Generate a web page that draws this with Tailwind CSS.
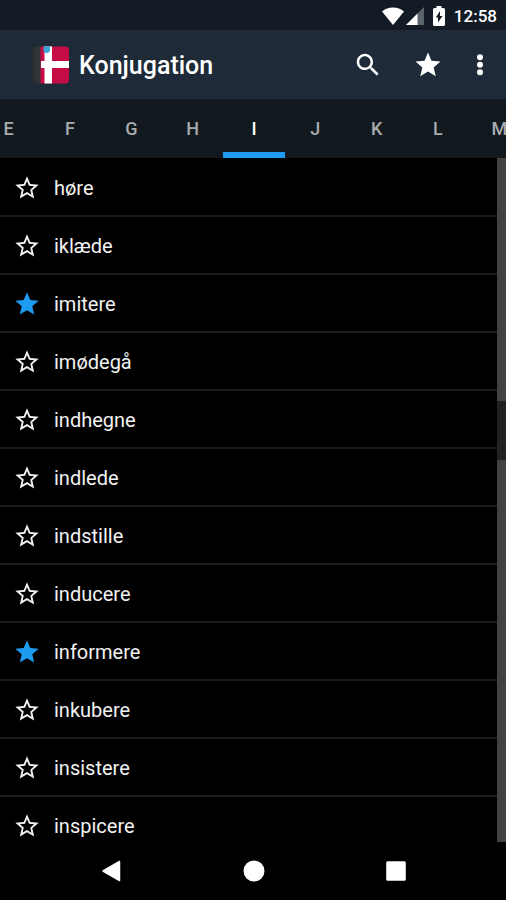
<!DOCTYPE html>
<html lang="da">
<head>
<meta charset="utf-8">
<meta name="viewport" content="width=device-width, initial-scale=1">
<title>Konjugation</title>
<script src="https://cdn.jsdelivr.net/npm/@tailwindcss/browser@4"></script>
</head>
<body class="flex h-screen flex-col overflow-hidden bg-black font-[Roboto,sans-serif] text-white">

<svg class="hidden" aria-hidden="true">
  <symbol id="star" viewBox="0 0 24 24"><path d="M12 17.27L18.18 21l-1.64-7.03L22 9.24l-7.19-.61L12 2 9.19 8.63 2 9.24l5.46 4.73L5.82 21z"/></symbol>
  <symbol id="star-outline" viewBox="0 0 24 24"><path d="M22 9.24l-7.19-.62L12 2 9.19 8.63 2 9.24l5.46 4.73L5.82 21 12 17.27 18.18 21l-1.63-7.03L22 9.24zM12 15.4l-3.76 2.27 1-4.28-3.32-2.88 4.38-.38L12 6.1l1.71 4.04 4.38.38-3.32 2.88 1 4.28L12 15.4z"/></symbol>
</svg>

<div class="flex h-[30px] shrink-0 items-center justify-end bg-[#131c25] pt-px pr-[9px]">
  <svg class="h-[18px] w-[22px]" viewBox="0 0 22 18" fill="#fff"><path d="M0 4.400Q4.600 .6 11 .6T22 4.400L11 18z"/></svg>
  <svg class="ml-[2px] h-[18px] w-[18px]" viewBox="0 0 18 18"><path d="M0 18L18 0v18z" fill="#5b636b"/><path d="M0 18L11.500 6.500V18z" fill="#fff"/></svg>
  <svg class="ml-[9px] h-[20px] w-[12px]" viewBox="0 0 12 20"><path d="M3.500 0h5v2h2q1.500 0 1.500 1.500v15q0 1.500-1.500 1.500h-9Q0 20 0 18.500v-15Q0 2 1.500 2h2z" fill="#fff"/><path d="M7 5v5h2.500L5 16.500v-5H2.800z" fill="#131c25"/></svg>
  <span class="ml-[9px] text-[17px] leading-5 font-medium">12:58</span>
</div>

<header class="flex h-[69px] shrink-0 items-center bg-[#1e2a38] pr-[6px] pl-8">
  <svg class="h-[38px] w-[38px]" viewBox="0 0 38 38" role="img" aria-label="Dansk">
    <defs>
      <linearGradient id="edge"><stop offset="0" stop-color="#252b30"/><stop offset=".4" stop-color="#303233"/><stop offset="1" stop-color="#353535"/></linearGradient>
      <clipPath id="tile"><rect width="37" height="37" y=".5" rx="4"/></clipPath>
    </defs>
    <g clip-path="url(#tile)">
      <path d="M0 0h9v38H0z" fill="url(#edge)"/>
      <path d="M8.500 0h29v38h-29z" fill="#c60c45"/>
      <path d="M12.500 0h7.500v38h-7.500zM9 15h28v7H9z" fill="#fff"/>
      <path d="M11.500 0H18v5l-2 2h-2.500l-2-2z" fill="#35a8d8"/>
    </g>
  </svg>
  <h1 class="ml-[9px] flex-1 pt-[2px] text-[25px] leading-8 font-medium">Konjugation</h1>
  <button type="button" aria-label="Søg" class="flex size-10 items-center justify-center"><svg class="size-[30px]" viewBox="0 0 24 24" fill="#fff"><path d="M15.500 14h-.79l-.28-.27C15.410 12.590 16 11.110 16 9.500 16 5.910 13.090 3 9.500 3S3 5.910 3 9.500 5.910 16 9.500 16c1.610 0 3.090-.59 4.230-1.570l.27.28v.79l5 4.990L20.490 19l-4.990-5zm-6 0C7.010 14 5 11.990 5 9.500S7.010 5 9.500 5 14 7.010 14 9.500 11.990 14 9.500 14z"/></svg></button>
  <button type="button" aria-label="Favoritter" class="ml-5 flex size-10 items-center justify-center"><svg class="size-[30px] fill-white"><use href="#star"/></svg></button>
  <button type="button" aria-label="Mere" class="ml-3 flex size-10 items-center justify-center"><svg class="size-[30px]" viewBox="0 0 24 24" fill="#fff"><circle cx="12" cy="5.700" r="2.400"/><circle cx="12" cy="11.700" r="2.400"/><circle cx="12" cy="17.700" r="2.400"/></svg></button>
</header>

<nav class="h-[59px] shrink-0 overflow-hidden bg-[#11191f]" aria-label="Bogstaver">
  <div class="-mr-6 -ml-[22px] flex h-full text-lg leading-6 font-medium text-[#a8abad]">
    <a href="#e" class="flex flex-1 items-center justify-center pt-[6px] border-b-[6px] border-transparent">E</a>
    <a href="#f" class="flex flex-1 items-center justify-center pt-[6px] border-b-[6px] border-transparent">F</a>
    <a href="#g" class="flex flex-1 items-center justify-center pt-[6px] border-b-[6px] border-transparent">G</a>
    <a href="#h" class="flex flex-1 items-center justify-center pt-[6px] border-b-[6px] border-transparent">H</a>
    <a href="#i" aria-current="true" class="flex flex-1 items-center justify-center pt-[6px] border-b-[6px] border-[#1d9bf0] text-white">I</a>
    <a href="#j" class="flex flex-1 items-center justify-center pt-[6px] border-b-[6px] border-transparent">J</a>
    <a href="#k" class="flex flex-1 items-center justify-center pt-[6px] border-b-[6px] border-transparent">K</a>
    <a href="#l" class="flex flex-1 items-center justify-center pt-[6px] border-b-[6px] border-transparent">L</a>
    <a href="#m" class="flex flex-1 items-center justify-center pt-[6px] border-b-[6px] border-transparent">M</a>
  </div>
</nav>

<main class="relative min-h-0 flex-1 overflow-hidden">
  <ul class="pt-px text-xl leading-7 text-[#f2f2f2]">
    <li class="flex h-[58px] items-center border-b-2 border-[#1b1b1b] pt-[2px] pl-[13px]"><button type="button" aria-label="Favorit"><svg class="size-7 fill-[#f2f2f2]"><use href="#star-outline"/></svg></button><span class="ml-[13px]">høre</span></li>
    <li class="flex h-[58px] items-center border-b-2 border-[#1b1b1b] pt-[2px] pl-[13px]"><button type="button" aria-label="Favorit"><svg class="size-7 fill-[#f2f2f2]"><use href="#star-outline"/></svg></button><span class="ml-[13px]">iklæde</span></li>
    <li class="flex h-[58px] items-center border-b-2 border-[#1b1b1b] pt-[2px] pl-[13px]"><button type="button" aria-label="Favorit" aria-pressed="true"><svg class="size-7 fill-[#1d9bf0]"><use href="#star"/></svg></button><span class="ml-[13px]">imitere</span></li>
    <li class="flex h-[58px] items-center border-b-2 border-[#1b1b1b] pt-[2px] pl-[13px]"><button type="button" aria-label="Favorit"><svg class="size-7 fill-[#f2f2f2]"><use href="#star-outline"/></svg></button><span class="ml-[13px]">imødegå</span></li>
    <li class="flex h-[58px] items-center border-b-2 border-[#1b1b1b] pt-[2px] pl-[13px]"><button type="button" aria-label="Favorit"><svg class="size-7 fill-[#f2f2f2]"><use href="#star-outline"/></svg></button><span class="ml-[13px]">indhegne</span></li>
    <li class="flex h-[58px] items-center border-b-2 border-[#1b1b1b] pt-[2px] pl-[13px]"><button type="button" aria-label="Favorit"><svg class="size-7 fill-[#f2f2f2]"><use href="#star-outline"/></svg></button><span class="ml-[13px]">indlede</span></li>
    <li class="flex h-[58px] items-center border-b-2 border-[#1b1b1b] pt-[2px] pl-[13px]"><button type="button" aria-label="Favorit"><svg class="size-7 fill-[#f2f2f2]"><use href="#star-outline"/></svg></button><span class="ml-[13px]">indstille</span></li>
    <li class="flex h-[58px] items-center border-b-2 border-[#1b1b1b] pt-[2px] pl-[13px]"><button type="button" aria-label="Favorit"><svg class="size-7 fill-[#f2f2f2]"><use href="#star-outline"/></svg></button><span class="ml-[13px]">inducere</span></li>
    <li class="flex h-[58px] items-center border-b-2 border-[#1b1b1b] pt-[2px] pl-[13px]"><button type="button" aria-label="Favorit" aria-pressed="true"><svg class="size-7 fill-[#1d9bf0]"><use href="#star"/></svg></button><span class="ml-[13px]">informere</span></li>
    <li class="flex h-[58px] items-center border-b-2 border-[#1b1b1b] pt-[2px] pl-[13px]"><button type="button" aria-label="Favorit"><svg class="size-7 fill-[#f2f2f2]"><use href="#star-outline"/></svg></button><span class="ml-[13px]">inkubere</span></li>
    <li class="flex h-[58px] items-center border-b-2 border-[#1b1b1b] pt-[2px] pl-[13px]"><button type="button" aria-label="Favorit"><svg class="size-7 fill-[#f2f2f2]"><use href="#star-outline"/></svg></button><span class="ml-[13px]">insistere</span></li>
    <li class="flex h-[58px] items-center border-b-2 border-[#1b1b1b] pt-[2px] pl-[13px]"><button type="button" aria-label="Favorit"><svg class="size-7 fill-[#f2f2f2]"><use href="#star-outline"/></svg></button><span class="ml-[13px]">inspicere</span></li>
  </ul>
  <div class="absolute inset-y-0 right-0 flex w-[9px] flex-col bg-[#424242]">
    <div class="h-[243px]"></div>
    <div class="h-[59px] bg-[#212121]"></div>
  </div>
</main>

<footer class="flex h-[58px] shrink-0 items-center justify-around bg-black pr-[39px] pl-[41px]">
  <button type="button" aria-label="Tilbage"><svg class="size-6" viewBox="0 0 24 24" fill="#fff" stroke="#fff" stroke-width="1.500" stroke-linejoin="round"><path d="M3 12L19.500 2.500v19z"/></svg></button>
  <button type="button" aria-label="Hjem"><svg class="size-6" viewBox="0 0 24 24" fill="#fff"><circle cx="12" cy="12" r="10.500"/></svg></button>
  <button type="button" aria-label="Seneste"><svg class="size-6" viewBox="0 0 24 24" fill="#fff"><rect x="2.200" y="2.200" width="19.600" height="19.600" rx="1.500"/></svg></button>
</footer>
</body>
</html>
